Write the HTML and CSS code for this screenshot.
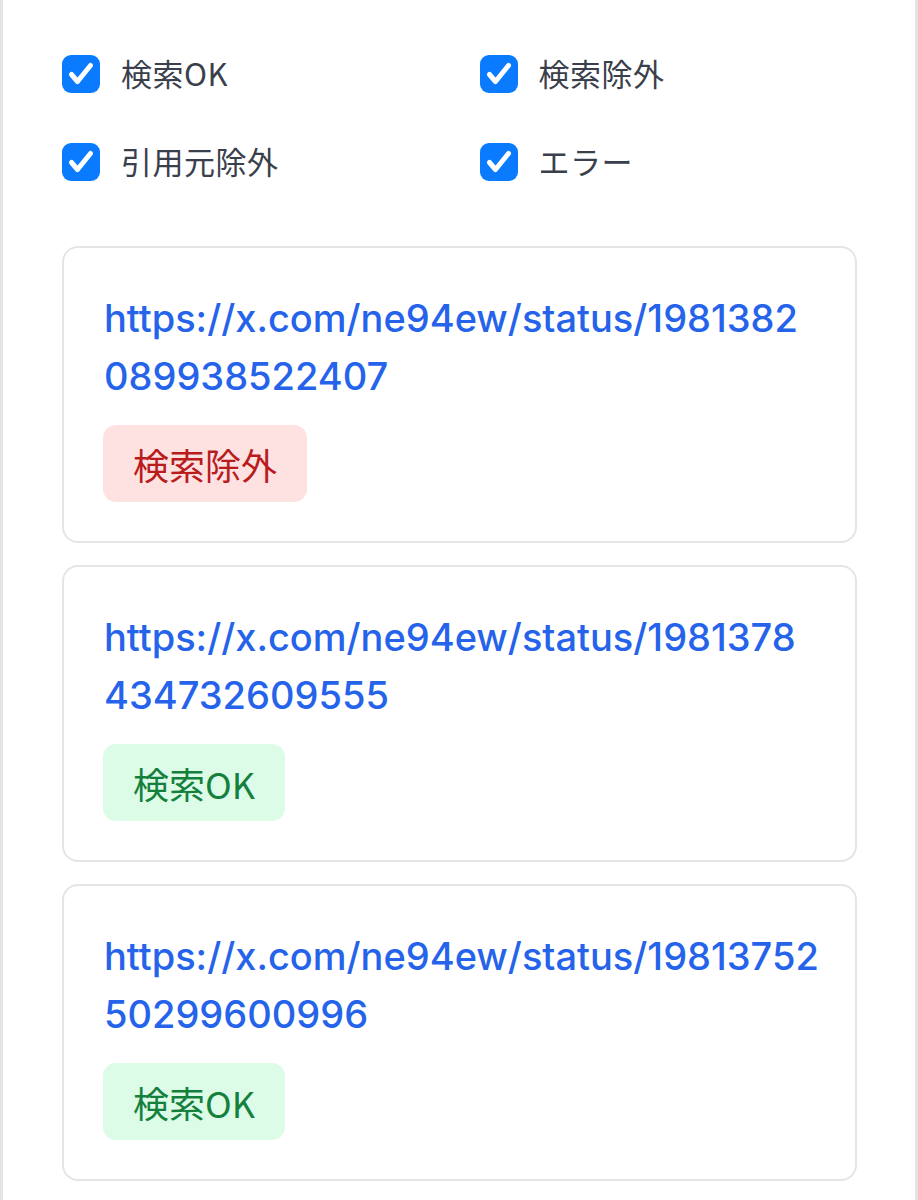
FILE: index.html
```html
<!DOCTYPE html>
<html lang="ja">
<head>
<meta charset="utf-8">
<title>検索結果</title>
<link rel="stylesheet" href="styles.css">
</head>
<body>
<div class="page">
  <div class="filters">
    <label class="filter"><span class="box"><svg viewBox="0 0 38 38" width="38" height="38"><path d="M9.5 19.5 L15.5 26.5 L28.5 10.5" fill="none" stroke="#fff" stroke-width="5" stroke-linecap="round" stroke-linejoin="round"/></svg></span><span class="label">検索OK</span></label>
    <label class="filter"><span class="box"><svg viewBox="0 0 38 38" width="38" height="38"><path d="M9.5 19.5 L15.5 26.5 L28.5 10.5" fill="none" stroke="#fff" stroke-width="5" stroke-linecap="round" stroke-linejoin="round"/></svg></span><span class="label">検索除外</span></label>
    <label class="filter"><span class="box"><svg viewBox="0 0 38 38" width="38" height="38"><path d="M9.5 19.5 L15.5 26.5 L28.5 10.5" fill="none" stroke="#fff" stroke-width="5" stroke-linecap="round" stroke-linejoin="round"/></svg></span><span class="label">引用元除外</span></label>
    <label class="filter"><span class="box"><svg viewBox="0 0 38 38" width="38" height="38"><path d="M9.5 19.5 L15.5 26.5 L28.5 10.5" fill="none" stroke="#fff" stroke-width="5" stroke-linecap="round" stroke-linejoin="round"/></svg></span><span class="label">エラー</span></label>
  </div>

  <div class="list">
    <div class="card">
      <a class="link" href="#">https://x.com/ne94ew/status/1981382<br>089938522407</a>
      <div><span class="badge badge-ng">検索除外</span></div>
    </div>
    <div class="card">
      <a class="link" href="#">https://x.com/ne94ew/status/1981378<br>434732609555</a>
      <div><span class="badge badge-ok">検索OK</span></div>
    </div>
    <div class="card">
      <a class="link" href="#">https://x.com/ne94ew/status/19813752<br>50299600996</a>
      <div><span class="badge badge-ok">検索OK</span></div>
    </div>
  </div>
</div>
</body>
</html>
```

FILE: styles.css
```css
* { box-sizing: border-box; }

html, body {
  margin: 0;
  padding: 0;
  background: #ffffff;
}

body {
  font-family: Inter, "Noto Sans CJK JP", sans-serif;
}

.page {
  width: 918px;
  min-height: 1200px;
  border-left: 3px solid #e4e4e4;
  border-right: 3px solid #e4e4e4;
  padding: 54px 58px 0 59px;
}

.filters {
  display: grid;
  grid-template-columns: 1fr 1fr;
  column-gap: 40px;
  row-gap: 48px;
}

.filter {
  display: flex;
  align-items: center;
  gap: 21px;
  height: 40px;
}

.box {
  width: 38px;
  height: 38px;
  border-radius: 9px;
  background: #0a7aff;
  display: flex;
  flex: none;
}

.label {
  font-family: "Noto Sans CJK JP", sans-serif;
  font-size: 31px;
  line-height: 40px;
  color: #3a404b;
  letter-spacing: 0.5px;
  margin-top: -3px;
}

.list {
  margin-top: 64px;
  display: flex;
  flex-direction: column;
  gap: 22px;
}

.card {
  border: 2px solid #e5e5e5;
  border-radius: 16px;
  padding: 41px 40px 39px 39px;
  height: 297px;
}

.link {
  display: block;
  font-family: Inter, sans-serif;
  font-weight: 500;
  font-size: 38px;
  line-height: 58px;
  color: #2563eb;
  text-decoration: none;
  white-space: nowrap;
  margin-left: 1px;
}

.badge {
  display: inline-flex;
  align-items: center;
  margin-top: 20px;
  height: 77px;
  padding: 0 30px;
  border-radius: 13px;
  font-family: "Noto Sans CJK JP", sans-serif;
  font-size: 36px;
}

.badge-ng {
  background: #fee2e2;
  color: #b91c1c;
}

.badge-ok {
  background: #dcfce7;
  color: #15803d;
}
```
